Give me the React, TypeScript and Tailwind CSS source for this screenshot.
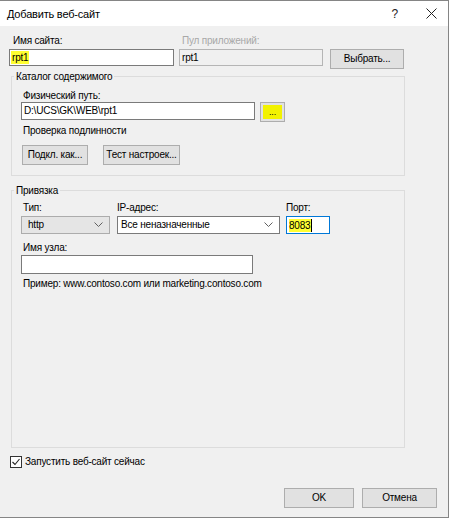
import React from "react";

const Chevron = () => (
  <svg width="9" height="6" viewBox="0 0 9 6" className="shrink-0">
    <polyline points="0.5,0.5 4.5,4.5 8.5,0.5" fill="none" stroke="#606060" strokeWidth="1" />
  </svg>
);

const WinButton = ({ children, className = "" }: { children: React.ReactNode; className?: string }) => (
  <div
    className={`h-[20px] flex items-center justify-center whitespace-nowrap border border-[#adadad] bg-[#e1e1e1] text-black ${className}`}
  >
    {children}
  </div>
);

const Label = ({ children, className = "" }: { children: React.ReactNode; className?: string }) => (
  <div className={`h-[14px] leading-[14px] whitespace-nowrap ${className}`}>{children}</div>
);

export default function App() {
  return (
    <div
      className="w-[449px] h-[518px] flex flex-col bg-[#f0f0f0] border-t border-r border-b border-[#858585] text-[10px] leading-[14px] tracking-[-0.2px] text-black overflow-hidden"
      style={{ fontFamily: '"Liberation Sans", Arial, sans-serif' }}
    >
      {/* title bar */}
      <div className="h-[25px] bg-white flex items-center pl-[7px] pr-[11px] shrink-0">
        <span className="text-[11px] flex-1">Добавить веб-сайт</span>
        <span className="text-[12px] text-[#222] mr-[28px]">?</span>
        <svg width="11" height="11" viewBox="0 0 11 11">
          <path d="M0.5 0.5 L10.5 10.5 M10.5 0.5 L0.5 10.5" stroke="#222" strokeWidth="1" />
        </svg>
      </div>

      <div className="flex-1 flex flex-col pl-[9px] pt-[8px]">
        {/* site name row */}
        <div className="flex">
          <div className="w-[165px] flex flex-col">
            <Label className="pl-[4px]">Имя сайта:</Label>
            <div className="h-[17px] mt-[1px] bg-white border border-[#7a7a7a] flex items-center pl-[1px]">
              <span className="bg-[#ffff33] px-[1px] leading-[13px]">rpt1</span>
            </div>
          </div>
          <div className="w-[144px] ml-[5px] flex flex-col">
            <Label className="pl-[3px] text-[#a8a8a8]">Пул приложений:</Label>
            <div className="h-[17px] mt-[1px] bg-[#f0f0f0] border border-[#b5b5b5] flex items-center pl-[2px]">
              rpt1
            </div>
          </div>
          <div className="flex flex-col ml-[7px]">
            <div className="h-[15px]" />
            <WinButton className="w-[74px]">Выбрать...</WinButton>
          </div>
        </div>

        {/* content directory */}
        <fieldset className="w-[394px] ml-[2px] border border-[#dcdcdc] pl-[9px] pb-[10px]">
          <legend className="-ml-[7px] px-[2px] leading-[15px]">Каталог содержимого</legend>
          <div className="h-[13px] leading-[13px] mt-[5px] pl-[2px]">Физический путь:</div>
          <div className="flex">
            <div className="w-[234px] h-[18px] bg-white border border-[#7a7a7a] flex items-center pl-[2px]">
              D:\UCS\GK\WEB\rpt1
            </div>
            <div className="w-[25px] h-[20px] ml-[5px] border border-[#adadad] bg-[#e1e1e1] p-[2px]">
              <div className="w-full h-full bg-[#f2f200] flex items-center justify-center text-[9px] leading-none">
                ...
              </div>
            </div>
          </div>
          <Label className="mt-[2px] pl-[2px]">Проверка подлинности</Label>
          <div className="flex mt-[7px] pl-[1px]">
            <WinButton className="w-[66px]">Подкл. как...</WinButton>
            <WinButton className="w-[77px] ml-[15px]">Тест настроек...</WinButton>
          </div>
        </fieldset>

        {/* binding */}
        <fieldset className="w-[394px] h-[265px] ml-[2px] mt-[7px] border border-[#dcdcdc] pl-[9px]">
          <legend className="-ml-[7px] px-[2px] leading-[15px]">Привязка</legend>
          <div className="flex mt-[3px]">
            <div className="w-[89px] flex flex-col">
              <Label className="pl-[2px]">Тип:</Label>
              <div className="h-[18px] mt-[1px] bg-[#e5e5e5] border border-[#acacac] flex items-center pl-[6px] pr-[6px]">
                <span className="flex-1">http</span>
                <Chevron />
              </div>
            </div>
            <div className="w-[163px] ml-[7px] flex flex-col">
              <Label>IP-адрес:</Label>
              <div className="h-[18px] mt-[1px] bg-white border border-[#7a7a7a] flex items-center pl-[3px] pr-[6px]">
                <span className="flex-1">Все неназначенные</span>
                <Chevron />
              </div>
            </div>
            <div className="w-[44px] ml-[6px] flex flex-col">
              <Label>Порт:</Label>
              <div className="h-[18px] mt-[1px] bg-white border border-[#0078d7] flex items-center pl-[2px]">
                <span className="bg-[#ffff33] leading-[13px] border-r border-black pr-[1px]">8083</span>
              </div>
            </div>
          </div>
          <Label className="mt-[7px] pl-[2px]">Имя узла:</Label>
          <div className="w-[232px] h-[19px] bg-white border border-[#7a7a7a]" />
          <Label className="mt-[3px] pl-[2px]">Пример: www.contoso.com или marketing.contoso.com</Label>
        </fieldset>

        {/* start now */}
        <div className="flex items-center h-[14px] mt-[7px] ml-[1px]">
          <svg width="12" height="12" viewBox="0 0 12 12">
            <rect x="0.5" y="0.5" width="11" height="11" fill="white" stroke="#333" />
            <polyline points="2.5,6 5,8.5 9.5,3" fill="none" stroke="#222" strokeWidth="1.1" />
          </svg>
          <span className="ml-[3px]">Запустить веб-сайт сейчас</span>
        </div>

        <div className="flex justify-end mt-[19px] pr-[11px]">
          <WinButton className="w-[70px] border-[#0078d7]">OK</WinButton>
          <WinButton className="w-[75px] ml-[8px]">Отмена</WinButton>
        </div>
      </div>
    </div>
  );
}
